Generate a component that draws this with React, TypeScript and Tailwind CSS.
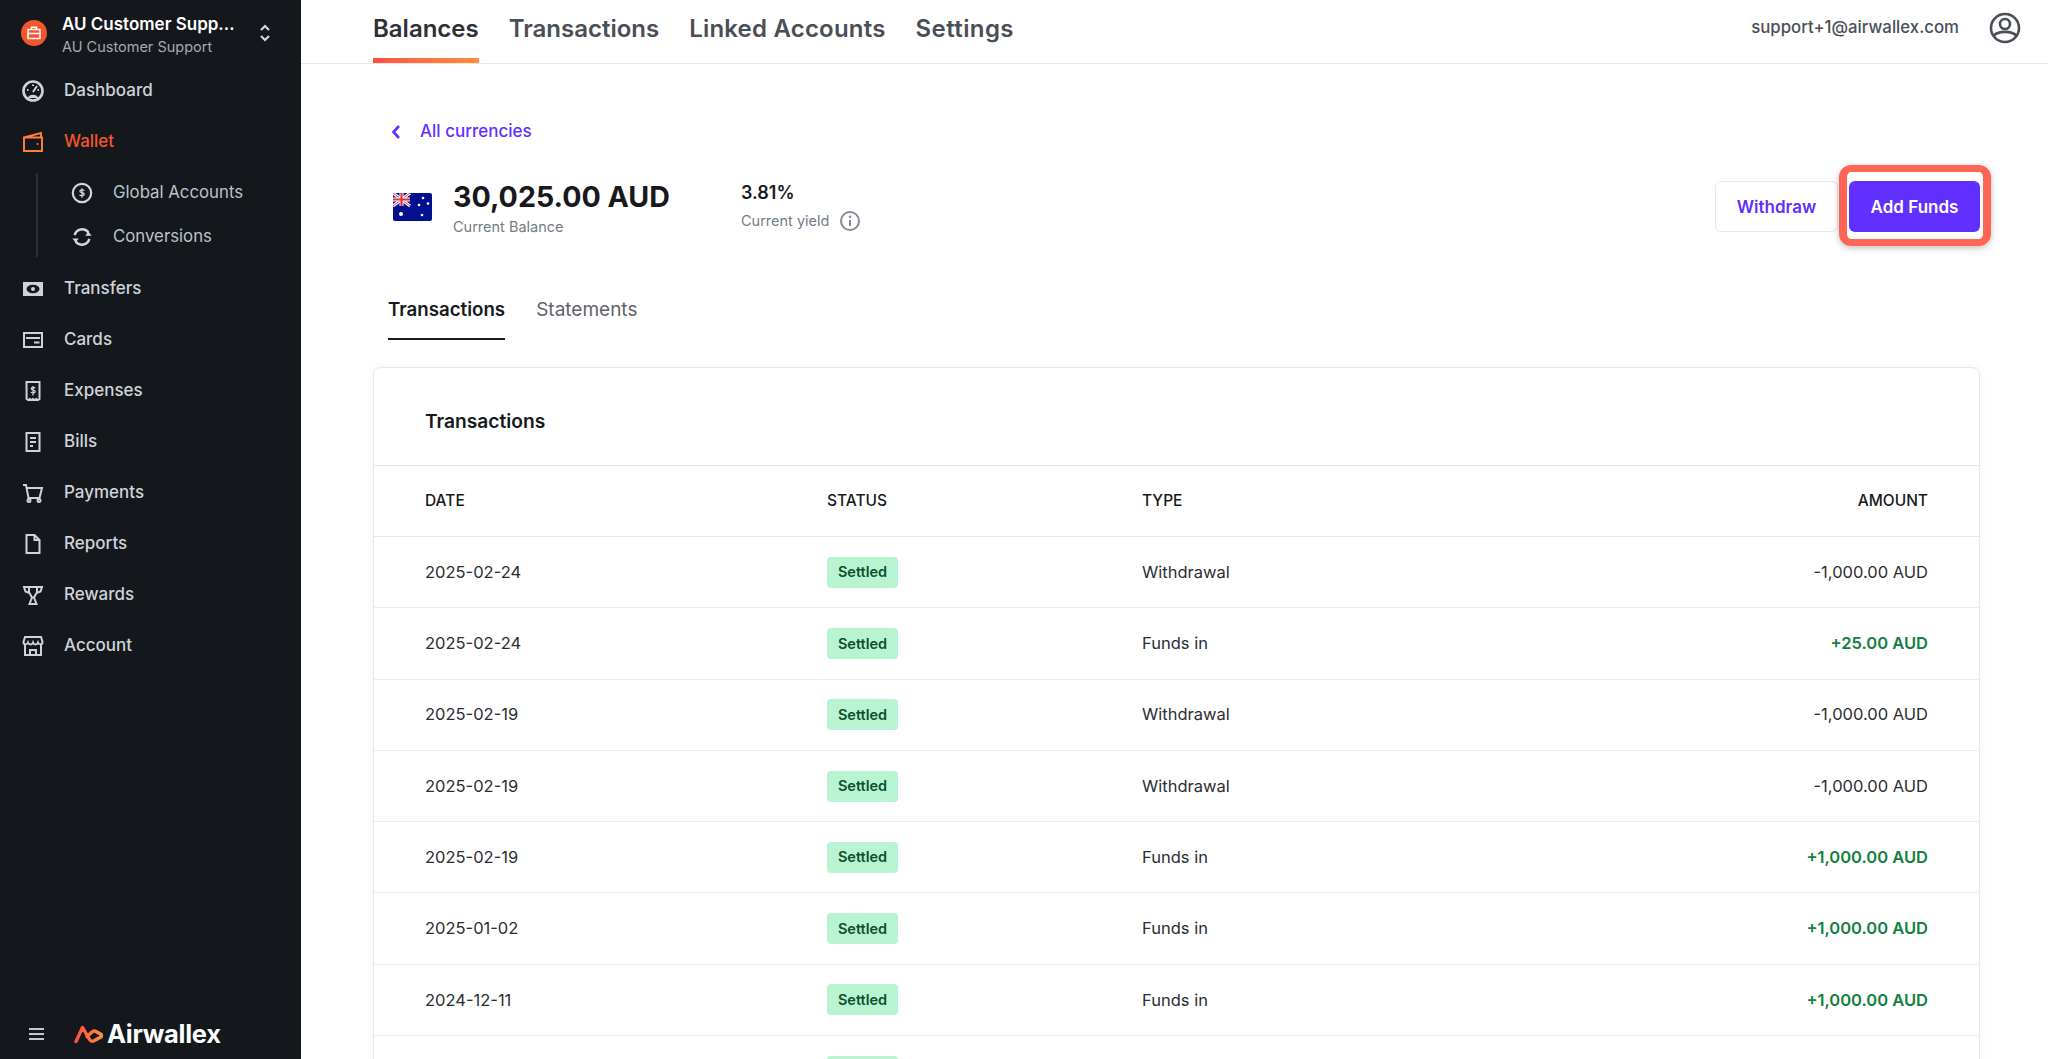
import React from "react";

const font = "font-['Inter','Liberation_Sans',sans-serif]";

function Ic({ children, size = 24 }: { children: React.ReactNode; size?: number }) {
    return (
        <svg width={size} height={size} viewBox="0 0 24 24" fill="none" stroke="currentColor" strokeWidth="2" className="shrink-0">
            {children}
        </svg>
    );
}

const navTop = [
    {
        label: "Transfers",
        icon: (
            <Ic>
                <rect x="2" y="5" width="20" height="14" fill="currentColor" stroke="none" />
                <ellipse cx="12" cy="12" rx="6.500" ry="4.200" fill="#14181c" stroke="none" />
                <circle cx="12" cy="12" r="2" fill="currentColor" stroke="none" />
            </Ic>
        ),
    },
    {
        label: "Cards",
        icon: (
            <Ic>
                <rect x="3" y="5" width="18" height="14" />
                <path d="M5 10h14M13 14.500h5.500" />
            </Ic>
        ),
    },
    {
        label: "Expenses",
        icon: (
            <Ic>
                <path d="M5.500 3h13v17l-1.600 1-1.600-1-1.600 1-1.700-1-1.600 1-1.600-1-1.600 1-1.600-1z" />
                <path d="M14.200 9.300c-.5-1-3.900-1.300-3.900.5 0 1.900 3.900.8 3.900 2.800 0 1.800-3.600 1.500-4.200.4M12 7v9.500" strokeWidth="1.300" />
            </Ic>
        ),
    },
    {
        label: "Bills",
        icon: (
            <Ic>
                <rect x="5.500" y="3" width="13" height="18" />
                <path d="M9 8h6M9 12h6M9 16h3" />
            </Ic>
        ),
    },
    {
        label: "Payments",
        icon: (
            <Ic>
                <path d="M2 4h3l2.500 13h11L21 7H5.500" />
                <circle cx="8" cy="19.500" r="1.500" />
                <circle cx="18" cy="19.500" r="1.500" />
            </Ic>
        ),
    },
    {
        label: "Reports",
        icon: (
            <Ic>
                <path d="M5.500 3h8l5 5v13h-13zM13.500 3v5h5" />
            </Ic>
        ),
    },
    {
        label: "Rewards",
        icon: (
            <Ic>
                <path d="M3 4h18l-1.500 4.500L15.500 10 13 14.500h-2L8.500 10l-4-1.500zM8 10V4M16 10V4M11 14.500 8.500 21h7L13 14.500" />
            </Ic>
        ),
    },
    {
        label: "Account",
        icon: (
            <Ic>
                <path d="M4 3h16l1.500 5c0 3-3.500 3-4.500.5-1 2.500-4 2.500-5 0-1 2.500-4 2.500-5 0C6 11 2.500 11 2.500 8zM4 11v10h16V11M9 21v-5h6v5" />
            </Ic>
        ),
    },
];

const rows = [
    { date: "2025-02-24", type: "Withdrawal", amount: "-1,000.00 AUD", plus: false },
    { date: "2025-02-24", type: "Funds in", amount: "+25.00 AUD", plus: true },
    { date: "2025-02-19", type: "Withdrawal", amount: "-1,000.00 AUD", plus: false },
    { date: "2025-02-19", type: "Withdrawal", amount: "-1,000.00 AUD", plus: false },
    { date: "2025-02-19", type: "Funds in", amount: "+1,000.00 AUD", plus: true },
    { date: "2025-01-02", type: "Funds in", amount: "+1,000.00 AUD", plus: true },
    { date: "2024-12-11", type: "Funds in", amount: "+1,000.00 AUD", plus: true },
];

function Sidebar() {
    return (
        <aside className="w-[301px] shrink-0 h-full bg-[#14181c] flex flex-col text-[#cfd3d9]">
            <div className="h-[65px] shrink-0 flex items-center pl-[21px] pr-[29px]">
                <div className="w-[26px] h-[26px] rounded-full bg-[#f4552d] flex items-center justify-center text-white shrink-0">
                    <svg width="14" height="14" viewBox="0 0 14 14" fill="none" stroke="currentColor" strokeWidth="1.500">
                        <rect x="1" y="3.500" width="12" height="9" />
                        <path d="M4.500 3.500V1.200h5v2.300M1 7.500h12" />
                    </svg>
                </div>
                <div className="ml-[15px] flex-1 min-w-0 pt-[4px]">
                    <div className="text-[17px] leading-[22px] font-semibold text-white truncate">AU Customer Supp...</div>
                    <div className="text-[14.500px] leading-[20px] text-[#a4a9b1] mt-[2px] truncate">AU Customer Support</div>
                </div>
                <svg width="14" height="20" viewBox="0 0 14 20" fill="none" stroke="#d3d7dd" strokeWidth="2.200">
                    <path d="M3 7l4-4 4 4M3 13l4 4 4-4" />
                </svg>
            </div>
            <nav className="flex flex-col">
                <a className="h-[51px] flex items-center pl-[21px] gap-[19px] text-[17px] font-medium">
                    <Ic>
                        <circle cx="12" cy="12" r="9.500" strokeWidth="2.600" />
                        <path d="M12 13l4-6M6 11h1.500M16.500 11H18M12 5.500V7" />
                        <path d="M6.500 19c2-4.500 9-4.500 11 0z" fill="currentColor" stroke="none" />
                    </Ic>
                    Dashboard
                </a>
                <a className="h-[51px] flex items-center pl-[21px] gap-[19px] text-[17px] font-medium text-[#f4552d]">
                    <span className="text-[#ff7d3a]">
                        <Ic>
                            <path d="M3 21V7.500h18V21zM3 7.500L20 3v4.500" />
                            <circle cx="16.500" cy="14" r="1" fill="currentColor" stroke="none" />
                        </Ic>
                    </span>
                    Wallet
                </a>
                <div className="relative py-[4px] pl-[71px] flex flex-col text-[#bdc2c9] text-[16.800px]">
                    <div className="absolute left-[36px] top-[6px] bottom-[6px] w-[2px] bg-[#2c3137]"></div>
                    <a className="h-[44px] flex items-center gap-[20px]">
                        <svg width="22" height="22" viewBox="0 0 24 24" fill="none" stroke="#d3d7dd" strokeWidth="2.400">
                            <circle cx="12" cy="12" r="10" />
                            <path d="M14.500 9.500c-.6-1.300-4.800-1.500-4.800.6 0 2.200 4.800.9 4.800 3.300 0 2.100-4.500 1.900-5.200.5M12 6.800v10.400" strokeWidth="1.400" />
                        </svg>
                        Global Accounts
                    </a>
                    <a className="h-[44px] flex items-center gap-[20px]">
                        <svg width="22" height="22" viewBox="0 0 24 24" fill="none" stroke="#d3d7dd" strokeWidth="2.600">
                            <path d="M4 10a8.500 8.500 0 0 1 15-3M20 14a8.500 8.500 0 0 1-15 3" />
                            <path d="M22.500 10.500h-7l3.500-4.500zM1.500 13.500h7l-3.500 4.500z" fill="#d3d7dd" stroke="none" />
                        </svg>
                        Conversions
                    </a>
                </div>
                {navTop.map((item) => (
                    <a key={item.label} className="h-[51px] flex items-center pl-[21px] gap-[19px] text-[17px] font-medium">
                        {item.icon}
                        {item.label}
                    </a>
                ))}
            </nav>
            <div className="mt-auto h-[50px] flex items-center pl-[29px]">
                <svg width="15" height="14" viewBox="0 0 15 14" fill="none" stroke="#c3c8cf" strokeWidth="2">
                    <path d="M0 2h15M0 7h15M0 12h15" />
                </svg>
                <svg width="31" height="21" viewBox="0 0 31 21" fill="none" className="ml-[29px]">
                    <defs>
                        <linearGradient id="awx" x1="0" y1="0" x2="1" y2="0">
                            <stop offset="0" stopColor="#ff4f42" />
                            <stop offset="1" stopColor="#ff8e3c" />
                        </linearGradient>
                    </defs>
                    <path d="M3 17.500L9.500 3.500l7 12q1.500 2.500 4 1.500l7.500-4q1-2-.5-3L22 7q-1.500-.5-3 1l-5 4.500" stroke="url(#awx)" strokeWidth="3.400" strokeLinejoin="round" strokeLinecap="round" />
                </svg>
                <span className="ml-[3px] text-[25.500px] font-bold text-white tracking-[-0.3px]">Airwallex</span>
            </div>
        </aside>
    );
}

function Table() {
    return (
        <div className="mt-[27px] mr-[68px] ml-[72px] rounded-[8px] border border-[#e8e8ea] shadow-[0_0_8px_rgba(0,0,0,0.06)] bg-white text-[#2b2e33]">
            <div className="h-[98px] flex items-center px-[51px] pt-[9px] text-[19.200px] font-semibold text-[#17191c] border-b border-[#e8e8ea]">
                Transactions
            </div>
            <div className="grid grid-cols-[402px_315px_1fr_auto] items-center h-[71px] px-[51px] text-[15.500px] font-medium text-[#17191c] border-b border-[#e8e8ea]">
                <span>DATE</span>
                <span>STATUS</span>
                <span>TYPE</span>
                <span>AMOUNT</span>
            </div>
            {rows.map((row, i) => (
                <div key={i} className="grid grid-cols-[402px_315px_1fr_auto] items-center h-[71.300px] px-[51px] text-[16.500px] border-b border-[#ececee]">
                    <span>{row.date}</span>
                    <span>
                        <span className="inline-flex items-center justify-center w-[71px] h-[31px] rounded-[4px] bg-[#b9f4d2] text-[#0b4f2b] text-[14.500px] font-semibold">Settled</span>
                    </span>
                    <span>{row.type}</span>
                    <span className={row.plus ? "text-[#12803f] font-semibold" : ""}>{row.amount}</span>
                </div>
            ))}
            {/* next row only shows the top of its badge before the fold */}
            <div className="grid grid-cols-[402px_315px_1fr_auto] items-center h-[71.300px] px-[51px]">
                <span></span>
                <span className="block w-[71px] h-[31px] rounded-[4px] bg-[#b9f4d2]"></span>
            </div>
        </div>
    );
}

export default function App() {
    return (
        <div className={`${font} h-screen w-full flex overflow-hidden bg-white`}>
            <Sidebar />
            <main className="flex-1 min-w-0">
                <header className="h-[64px] border-b border-[#e6e7e9] flex items-start pl-[72px] pr-[27px]">
                    <div className="flex gap-[30px] text-[24px] font-semibold text-[#4a4f57]">
                        <a className="relative h-[63px] flex items-center pb-[6px] text-[#2d3035] before:absolute before:left-0 before:right-0 before:bottom-0 before:h-[5px] before:bg-gradient-to-r before:from-[#ff4f42] before:to-[#ff8e3c]">Balances</a>
                        <a className="h-[63px] flex items-center pb-[6px]">Transactions</a>
                        <a className="h-[63px] flex items-center pb-[6px] tracking-[0.2px]">Linked Accounts</a>
                        <a className="h-[63px] flex items-center pb-[6px] tracking-[0.4px]">Settings</a>
                    </div>
                    <div className="ml-auto h-[55px] flex items-center gap-[30px] text-[#4a4f57]">
                        <span className="text-[16.800px] font-medium">support+1@airwallex.com</span>
                        <svg width="32" height="32" viewBox="0 0 32 32" fill="none" stroke="currentColor" strokeWidth="2.600">
                            <circle cx="16" cy="16" r="14" />
                            <circle cx="16" cy="12" r="5" />
                            <path d="M4.500 24c4-5.500 19-5.500 23 0" />
                        </svg>
                    </div>
                </header>
                <div className="ml-[90px] mt-[56px] flex items-center text-[#612fff] text-[17px] font-medium h-[24px]">
                    <svg width="10" height="16" viewBox="0 0 10 16" fill="none" stroke="currentColor" strokeWidth="2.600">
                        <path d="M8 2L2.500 8 8 14" />
                    </svg>
                    <span className="ml-[19px]">All currencies</span>
                </div>
                <div className="relative mt-[37px] pl-[92px] pr-[68px] flex items-center h-[51px]">
                    <svg width="39" height="28" viewBox="0 0 39 28" className="shrink-0 rounded-[2px]">
                        <rect width="39" height="28" fill="#00108f" />
                        <rect width="17" height="13" fill="#00108f" />
                        <path d="M0 0l17 13M17 0L0 13" stroke="#fff" strokeWidth="3" />
                        <path d="M0 0l17 13M17 0L0 13" stroke="#e0303f" strokeWidth="1" />
                        <path d="M8.500 0v13M0 6.500h17" stroke="#fff" strokeWidth="4" />
                        <path d="M8.500 0v13M0 6.500h17" stroke="#e0303f" strokeWidth="2.200" />
                        <circle cx="8" cy="21" r="2" fill="#fff" />
                        <circle cx="26" cy="12" r="1.300" fill="#fff" />
                        <circle cx="30" cy="5" r="1.300" fill="#fff" />
                        <circle cx="35" cy="10.500" r="1.300" fill="#fff" />
                        <circle cx="29" cy="22" r="1.300" fill="#fff" />
                    </svg>
                    <div className="ml-[21px] w-[288px] pt-[5px]">
                        <div className="text-[28.600px] leading-[34px] font-bold text-[#17191c] mt-[-2px]">30,025.00 AUD</div>
                        <div className="text-[14.500px] leading-[20px] mt-[3px] text-[#757b85]">Current Balance</div>
                    </div>
                    <div className="-mt-[2px]">
                        <div className="text-[18px] leading-[24px] font-semibold text-[#17191c]">3.81%</div>
                        <div className="flex items-center gap-[11px] text-[14.500px] leading-[20px] text-[#757b85] mt-[6px]">
                            Current yield
                            <svg width="20" height="20" viewBox="0 0 20 20" fill="none" stroke="#868b95" strokeWidth="2">
                                <circle cx="10" cy="10" r="9" />
                                <path d="M10 9v6" />
                                <circle cx="10" cy="5.800" r="1.200" fill="#868b95" stroke="none" />
                            </svg>
                        </div>
                    </div>
                    <div className="ml-auto flex gap-[11px] text-[17px] font-semibold">
                        <button className="w-[123px] h-[51px] pt-[2px] rounded-[6px] border border-[#e6e7e9] text-[#612fff]">Withdraw</button>
                        <div className="relative">
                            <button className="w-[131px] h-[51px] pt-[2px] rounded-[6px] bg-[#612fff] text-white">Add Funds</button>
                            <div className="absolute left-[-10px] right-[-11px] top-[-16px] bottom-[-14px] rounded-[12px] border-[7px] border-x-[8px] border-[#ff6455] shadow-[0_2px_6px_rgba(0,0,0,0.25)] pointer-events-none"></div>
                        </div>
                    </div>
                </div>
                <div className="mt-[54px] ml-[87px] flex gap-[31px] h-[54px]">
                    <a className="h-full text-[18.700px] font-semibold text-[#17191c] border-b-2 border-[#17191c] pt-[10px]">Transactions</a>
                    <a className="h-full text-[19px] text-[#5f646d] pt-[10px]">Statements</a>
                </div>
                <Table />
            </main>
        </div>
    );
}
